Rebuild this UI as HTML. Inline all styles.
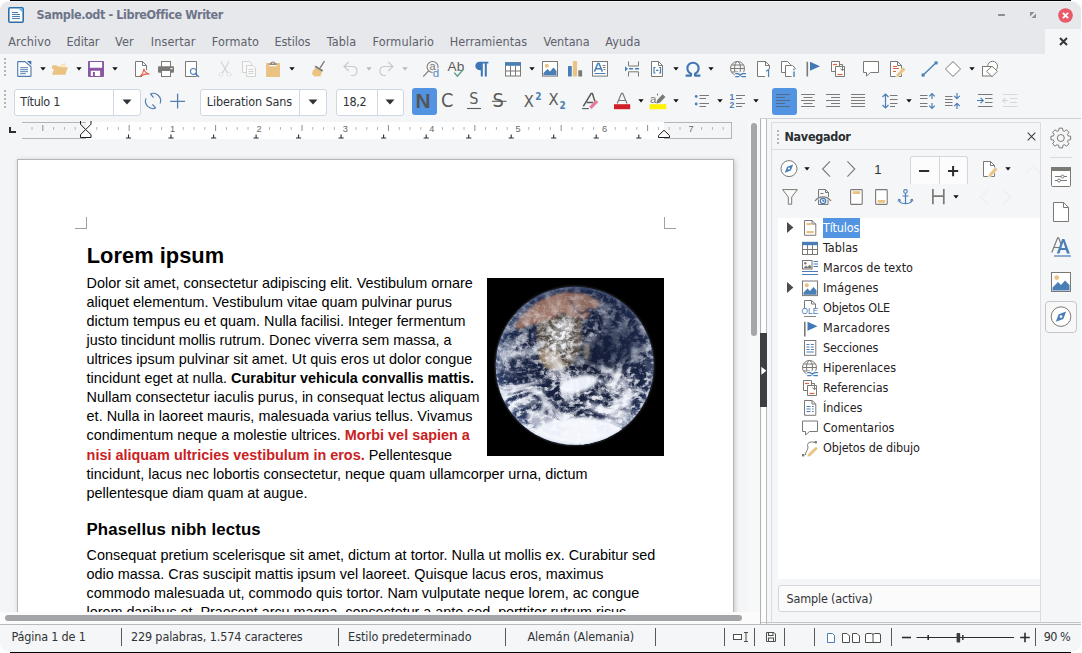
<!DOCTYPE html>
<html lang="es"><head><meta charset="utf-8"><title>Sample.odt - LibreOffice Writer</title>
<style>
html,body{margin:0;padding:0}
body{width:1082px;height:653px;position:relative;overflow:hidden;background:#fff;font-family:"DejaVu Sans Condensed","DejaVu Sans","Liberation Sans",sans-serif}
.u{position:absolute;white-space:pre;line-height:20px;font-family:"DejaVu Sans Condensed","DejaVu Sans","Liberation Sans",sans-serif}
.d{position:absolute;white-space:pre;line-height:20px;font-family:"Liberation Sans",sans-serif}
.a{position:absolute}
svg{position:absolute;overflow:visible}
.cb{background:#fff;border:1px solid #cfd6e6;border-radius:3px;box-sizing:border-box}
.cbd{width:1px;height:25px;background:#cfd6e6}
</style></head><body>
<div class="a" style="left:10px;top:0;width:1061px;height:653px;background:#000"></div>
<div class="a" id="win" style="left:0;top:1px;width:1081px;height:651px;background:#f5f6f7;border-radius:9px"></div>
<div class="a" id="titlebar" style="left:0;top:1px;width:1081px;height:53px;background:#e7e8eb;border-radius:9px 9px 0 0;box-shadow:inset 0 1px 0 #f3f4f6"></div>
<div class="a" style="left:1045px;top:29px;width:36px;height:25px;background:#f5f6f7"></div>

<!-- document area -->
<div class="a" id="docarea" style="left:0;top:0;width:748px;height:611.5px;overflow:hidden">
  <div class="a" style="left:0;top:119px;width:748px;height:493px;background:#f4f5f6"></div>
  <!-- ruler -->
  <div class="a" style="left:22px;top:122px;width:64px;height:15px;border-top:1px solid #b4b5b8;border-bottom:1px solid #b4b5b8"></div>
  <div class="a" style="left:86px;top:122px;width:578px;height:17px;background:#fff"></div>
  <div class="a" style="left:664px;top:122px;width:67px;height:15px;border:1px solid #b4b5b8;border-left:none"></div>
  <svg style="left:0;top:0" width="748" height="142" viewBox="0 0 748 142"><path d="M32.0 127V130" stroke="#b3b4b6" stroke-width="1"/><path d="M42.8 125V131" stroke="#8d8e90" stroke-width="1"/><path d="M53.6 127V130" stroke="#b3b4b6" stroke-width="1"/><path d="M64.4 127V130" stroke="#b3b4b6" stroke-width="1"/><path d="M75.2 127V130" stroke="#b3b4b6" stroke-width="1"/><path d="M96.8 127V130" stroke="#b3b4b6" stroke-width="1"/><path d="M107.6 127V130" stroke="#b3b4b6" stroke-width="1"/><path d="M118.4 127V130" stroke="#b3b4b6" stroke-width="1"/><path d="M129.2 125V131" stroke="#8d8e90" stroke-width="1"/><path d="M140.0 127V130" stroke="#b3b4b6" stroke-width="1"/><path d="M150.8 127V130" stroke="#b3b4b6" stroke-width="1"/><path d="M161.6 127V130" stroke="#b3b4b6" stroke-width="1"/><text x="170.0" y="132" font-size="9.2" font-family="Liberation Sans,sans-serif" fill="#66686b">1</text><path d="M183.2 127V130" stroke="#b3b4b6" stroke-width="1"/><path d="M194.0 127V130" stroke="#b3b4b6" stroke-width="1"/><path d="M204.8 127V130" stroke="#b3b4b6" stroke-width="1"/><path d="M215.6 125V131" stroke="#8d8e90" stroke-width="1"/><path d="M226.4 127V130" stroke="#b3b4b6" stroke-width="1"/><path d="M237.2 127V130" stroke="#b3b4b6" stroke-width="1"/><path d="M248.0 127V130" stroke="#b3b4b6" stroke-width="1"/><text x="256.4" y="132" font-size="9.2" font-family="Liberation Sans,sans-serif" fill="#66686b">2</text><path d="M269.6 127V130" stroke="#b3b4b6" stroke-width="1"/><path d="M280.4 127V130" stroke="#b3b4b6" stroke-width="1"/><path d="M291.2 127V130" stroke="#b3b4b6" stroke-width="1"/><path d="M302.0 125V131" stroke="#8d8e90" stroke-width="1"/><path d="M312.8 127V130" stroke="#b3b4b6" stroke-width="1"/><path d="M323.6 127V130" stroke="#b3b4b6" stroke-width="1"/><path d="M334.4 127V130" stroke="#b3b4b6" stroke-width="1"/><text x="342.8" y="132" font-size="9.2" font-family="Liberation Sans,sans-serif" fill="#66686b">3</text><path d="M356.0 127V130" stroke="#b3b4b6" stroke-width="1"/><path d="M366.8 127V130" stroke="#b3b4b6" stroke-width="1"/><path d="M377.6 127V130" stroke="#b3b4b6" stroke-width="1"/><path d="M388.4 125V131" stroke="#8d8e90" stroke-width="1"/><path d="M399.2 127V130" stroke="#b3b4b6" stroke-width="1"/><path d="M410.0 127V130" stroke="#b3b4b6" stroke-width="1"/><path d="M420.8 127V130" stroke="#b3b4b6" stroke-width="1"/><text x="429.2" y="132" font-size="9.2" font-family="Liberation Sans,sans-serif" fill="#66686b">4</text><path d="M442.4 127V130" stroke="#b3b4b6" stroke-width="1"/><path d="M453.2 127V130" stroke="#b3b4b6" stroke-width="1"/><path d="M464.0 127V130" stroke="#b3b4b6" stroke-width="1"/><path d="M474.8 125V131" stroke="#8d8e90" stroke-width="1"/><path d="M485.6 127V130" stroke="#b3b4b6" stroke-width="1"/><path d="M496.4 127V130" stroke="#b3b4b6" stroke-width="1"/><path d="M507.2 127V130" stroke="#b3b4b6" stroke-width="1"/><text x="515.6" y="132" font-size="9.2" font-family="Liberation Sans,sans-serif" fill="#66686b">5</text><path d="M528.8 127V130" stroke="#b3b4b6" stroke-width="1"/><path d="M539.6 127V130" stroke="#b3b4b6" stroke-width="1"/><path d="M550.4 127V130" stroke="#b3b4b6" stroke-width="1"/><path d="M561.2 125V131" stroke="#8d8e90" stroke-width="1"/><path d="M572.0 127V130" stroke="#b3b4b6" stroke-width="1"/><path d="M582.8 127V130" stroke="#b3b4b6" stroke-width="1"/><path d="M593.6 127V130" stroke="#b3b4b6" stroke-width="1"/><text x="602.0" y="132" font-size="9.2" font-family="Liberation Sans,sans-serif" fill="#66686b">6</text><path d="M615.2 127V130" stroke="#b3b4b6" stroke-width="1"/><path d="M626.0 127V130" stroke="#b3b4b6" stroke-width="1"/><path d="M636.8 127V130" stroke="#b3b4b6" stroke-width="1"/><path d="M647.6 125V131" stroke="#8d8e90" stroke-width="1"/><path d="M658.4 127V130" stroke="#b3b4b6" stroke-width="1"/><path d="M669.2 127V130" stroke="#b3b4b6" stroke-width="1"/><path d="M680.0 127V130" stroke="#b3b4b6" stroke-width="1"/><text x="688.4" y="132" font-size="9.2" font-family="Liberation Sans,sans-serif" fill="#66686b">7</text><path d="M701.6 127V130" stroke="#b3b4b6" stroke-width="1"/><path d="M712.4 127V130" stroke="#b3b4b6" stroke-width="1"/><path d="M723.2 127V130" stroke="#b3b4b6" stroke-width="1"/><path d="M128.5 134.6V138M125.9 138H131.1" stroke="#2d2d2d" stroke-width="1.1"/><path d="M171.0 134.6V138M168.4 138H173.6" stroke="#2d2d2d" stroke-width="1.1"/><path d="M213.6 134.6V138M211.0 138H216.2" stroke="#2d2d2d" stroke-width="1.1"/><path d="M256.1 134.6V138M253.5 138H258.7" stroke="#2d2d2d" stroke-width="1.1"/><path d="M298.6 134.6V138M296.0 138H301.2" stroke="#2d2d2d" stroke-width="1.1"/><path d="M341.1 134.6V138M338.5 138H343.7" stroke="#2d2d2d" stroke-width="1.1"/><path d="M383.6 134.6V138M381.0 138H386.2" stroke="#2d2d2d" stroke-width="1.1"/><path d="M426.2 134.6V138M423.6 138H428.8" stroke="#2d2d2d" stroke-width="1.1"/><path d="M468.7 134.6V138M466.1 138H471.3" stroke="#2d2d2d" stroke-width="1.1"/><path d="M511.2 134.6V138M508.6 138H513.8" stroke="#2d2d2d" stroke-width="1.1"/><path d="M553.7 134.6V138M551.1 138H556.3" stroke="#2d2d2d" stroke-width="1.1"/><path d="M596.2 134.6V138M593.6 138H598.8" stroke="#2d2d2d" stroke-width="1.1"/><path d="M638.8 134.6V138M636.2 138H641.4" stroke="#2d2d2d" stroke-width="1.1"/><path d="M80.5 121V124.2L85.7 129.6L91 124.2V121" stroke="#1c1c1c" fill="none" stroke-width="1"/><path d="M85.7 129.6L80.5 134.6V137.5H91V134.6z" stroke="#1c1c1c" fill="#fff" stroke-width="1"/><path d="M664 130.2L658.5 135.6V137.5H669.5V135.6z" stroke="#1c1c1c" fill="#fff" stroke-width="1"/><path d="M10 127V132H16" stroke="#2d2d2d" stroke-width="2" fill="none"/></svg>
  <!-- page -->
  <div class="a" id="page" style="left:17px;top:159px;width:717px;height:470px;background:#fff;border:1px solid #b4b5b8;box-sizing:border-box;box-shadow:1px 1px 5px rgba(0,0,0,.2)"></div>
  <!-- margin marks -->
  <div class="a" style="left:75px;top:217px;width:11px;height:11px;border-right:1px solid #a0a0a0;border-bottom:1px solid #a0a0a0"></div>
  <div class="a" style="left:664px;top:217px;width:11px;height:11px;border-left:1px solid #a0a0a0;border-bottom:1px solid #a0a0a0"></div>
  <svg style="left:487px;top:278px" width="177" height="177.6" viewBox="0 0 177 177.6">
<defs>
<radialGradient id="eo" cx="52%" cy="46%" r="54%"><stop offset="0" stop-color="#131a31"/><stop offset=".7" stop-color="#1a2545"/><stop offset=".9" stop-color="#34466f"/><stop offset="1" stop-color="#8b9cc6"/></radialGradient>
<linearGradient id="ecm" x1="0" y1="0" x2="0" y2="1"><stop offset="0" stop-color="#fff" stop-opacity=".12"/><stop offset=".3" stop-color="#fff" stop-opacity=".5"/><stop offset=".6" stop-color="#fff" stop-opacity=".9"/><stop offset="1" stop-color="#fff" stop-opacity="1"/></linearGradient>
<clipPath id="ec"><circle cx="87.7" cy="87.7" r="79"/></clipPath>
<filter id="eb1" x="-20%" y="-20%" width="140%" height="140%"><feGaussianBlur stdDeviation="1"/></filter>
<filter id="eb2" x="-30%" y="-30%" width="160%" height="160%"><feGaussianBlur stdDeviation="1.8"/></filter>
<filter id="eb4" x="-40%" y="-40%" width="180%" height="180%"><feGaussianBlur stdDeviation="7"/></filter>
<mask id="em"><rect width="177" height="177" fill="url(#ecm)"/>
 <g filter="url(#eb4)" fill="#000"><ellipse cx="134" cy="68" rx="24" ry="22" opacity=".7"/><ellipse cx="34" cy="98" rx="17" ry="10" opacity=".55"/><ellipse cx="106" cy="78" rx="15" ry="15" opacity=".8"/><ellipse cx="70" cy="128" rx="24" ry="5" opacity=".45"/></g></mask>
<filter id="ecl" x="0" y="0" width="100%" height="100%">
 <feTurbulence type="fractalNoise" baseFrequency=".018 .022" numOctaves="2" seed="7" result="w"/>
 <feTurbulence type="fractalNoise" baseFrequency=".05 .075" numOctaves="5" seed="11" result="n"/>
 <feDisplacementMap in="n" in2="w" scale="70" xChannelSelector="R" yChannelSelector="G"/>
 <feColorMatrix type="matrix" values="0 0 0 0 .9  0 0 0 0 .92  0 0 0 0 .98  3.6 1.8 0 0 -2.5"/></filter>
<filter id="ecl2" x="0" y="0" width="100%" height="100%"><feTurbulence type="fractalNoise" baseFrequency=".17 .22" numOctaves="3" seed="4"/><feColorMatrix type="matrix" values="0 0 0 0 .94  0 0 0 0 .96  0 0 0 0 1  4.4 1.4 0 0 -2.8"/></filter>
<mask id="em3"><g filter="url(#eb4)" fill="#fff"><ellipse cx="73" cy="60" rx="15" ry="21" transform="rotate(12 73 60)"/><ellipse cx="36" cy="70" rx="14" ry="12" opacity=".5"/><ellipse cx="128" cy="112" rx="16" ry="18" opacity=".5"/></g></mask>
<filter id="ecl3" x="0" y="0" width="100%" height="100%"><feTurbulence type="fractalNoise" baseFrequency=".2 .24" numOctaves="3" seed="23"/><feColorMatrix type="matrix" values="0 0 0 0 .95  0 0 0 0 .96  0 0 0 0 1  5 2 0 0 -3.25"/></filter>
</defs>
<rect width="177" height="178" fill="#000"/>
<g clip-path="url(#ec)">
<rect width="177" height="177" fill="url(#eo)"/>
<!-- land -->
<g filter="url(#eb1)">
<path d="M50 46L60 40L76 36L90 38L96 44L94 52L96 62L93 74L86 86L76 92L64 90L54 78L50 62z" fill="#4f4640"/>
<path d="M27 50L33 40L42 31L54 22L68 16.5L79 14L86 15.5L89 22L92 30L95 36L89 40L82 37L74 35L66 40L56 44L44 47L34 51z" fill="#916b5e"/>
<path d="M36 44L48 32L62 24L76 20L84 22L86 30L78 32L68 35L58 40L46 45z" fill="#9c7668"/>
<path d="M84 14.5L97 15.5L108 20.5L114 26.5L108 31L101 30L97 34L104 34L100 40L94 42L90 33L87 23z" fill="#8d6c61"/>
<path d="M81 19.5L85 25L90 33L95 35.5L103 32" stroke="#1c2746" stroke-width="1.6" fill="none"/>
<path d="M50 73L60 71L70 75L78 88L70 92L60 91L53 83z" fill="#93806a"/>
<path d="M96.5 67L101.5 66L102.5 74L100 82L97 79z" fill="#6f675e"/>
</g>
<!-- broad cloud masses -->
<g filter="url(#eb2)" fill="#e9edf6">
<ellipse cx="92" cy="155" rx="44" ry="16" fill="#f3f5fb"/>
<ellipse cx="60" cy="146" rx="22" ry="9" opacity=".7" transform="rotate(24 60 146)"/>
<ellipse cx="126" cy="144" rx="20" ry="8" opacity=".6" transform="rotate(-28 126 144)"/>
<ellipse cx="92" cy="106" rx="19" ry="8" transform="rotate(-14 92 106)"/>
<ellipse cx="74" cy="58" rx="10" ry="16" opacity=".3" transform="rotate(16 74 58)"/>
<path d="M26 114C32 106 52 108 57 122C60 134 50 140 43 134" stroke="#e9edf6" stroke-width="5" fill="none" opacity=".85"/>
<path d="M36 121C41 117 49 120 50 126" stroke="#e9edf6" stroke-width="3" fill="none" opacity=".7"/>
<path d="M114 90C132 96 146 112 141 132" stroke="#e9edf6" stroke-width="5" fill="none" opacity=".7"/>
<path d="M104 98C120 104 130 116 128 130" stroke="#e9edf6" stroke-width="3" fill="none" opacity=".55"/>
<ellipse cx="137" cy="122" rx="12" ry="6" opacity=".7" transform="rotate(-42 137 122)"/>
<ellipse cx="34" cy="75" rx="15" ry="4" opacity=".55" transform="rotate(-15 34 75)"/>
<ellipse cx="112" cy="131" rx="17" ry="4.5" opacity=".6" transform="rotate(20 112 131)"/>
<ellipse cx="148" cy="76" rx="4" ry="9" opacity=".45" transform="rotate(-12 148 76)"/>
</g>
<!-- noise clouds -->
<g mask="url(#em)"><rect width="177" height="177" filter="url(#ecl)"/></g>
<g mask="url(#em)" opacity=".85"><rect width="177" height="177" filter="url(#ecl2)"/></g>
<g mask="url(#em3)"><rect width="177" height="177" filter="url(#ecl3)"/></g>
</g>
<circle cx="87.7" cy="87.7" r="78.7" fill="none" stroke="#b4c2e4" stroke-opacity=".55" stroke-width="1.1" filter="url(#eb1)"/>
</svg>

  <span class="d" style="left:86.75px;top:246.13px;font-size:21.84px;font-weight:700;color:#000;letter-spacing:0.026px;">Lorem ipsum</span>
<span class="d" style="left:86.60px;top:273.41px;font-size:14.4px;font-weight:400;color:#000;letter-spacing:0.011px;">Dolor sit amet, consectetur adipiscing elit. Vestibulum ornare</span>
<span class="d" style="left:86.60px;top:292.41px;font-size:14.4px;font-weight:400;color:#000;letter-spacing:0.013px;">aliquet elementum. Vestibulum vitae quam pulvinar purus</span>
<span class="d" style="left:86.60px;top:311.41px;font-size:14.4px;font-weight:400;color:#000;letter-spacing:-0.006px;">dictum tempus eu et quam. Nulla facilisi. Integer fermentum</span>
<span class="d" style="left:86.60px;top:330.41px;font-size:14.4px;font-weight:400;color:#000;letter-spacing:0.005px;">justo tincidunt mollis rutrum. Donec viverra sem massa, a</span>
<span class="d" style="left:86.60px;top:349.41px;font-size:14.4px;font-weight:400;color:#000;letter-spacing:0.016px;">ultrices ipsum pulvinar sit amet. Ut quis eros ut dolor congue</span>
<span class="d" style="left:86.60px;top:368.41px;font-size:14.4px;font-weight:400;color:#000;letter-spacing:0.019px;">tincidunt eget at nulla. <b>Curabitur vehicula convallis mattis.</b></span>
<span class="d" style="left:86.60px;top:387.41px;font-size:14.4px;font-weight:400;color:#000;letter-spacing:0.004px;">Nullam consectetur iaculis purus, in consequat lectus aliquam</span>
<span class="d" style="left:86.60px;top:406.41px;font-size:14.4px;font-weight:400;color:#000;letter-spacing:0.022px;">et. Nulla in laoreet mauris, malesuada varius tellus. Vivamus</span>
<span class="d" style="left:86.60px;top:425.41px;font-size:14.4px;font-weight:400;color:#000;letter-spacing:0.017px;">condimentum neque a molestie ultrices. <b style="color:#c9211e">Morbi vel sapien a</b></span>
<span class="d" style="left:86.60px;top:445.01px;font-size:14.4px;font-weight:400;color:#000;letter-spacing:0.014px;"><b style="color:#c9211e">nisi aliquam ultricies vestibulum in eros.</b> Pellentesque</span>
<span class="d" style="left:86.60px;top:464.21px;font-size:14.4px;font-weight:400;color:#000;letter-spacing:0.003px;">tincidunt, lacus nec lobortis consectetur, neque quam ullamcorper urna, dictum</span>
<span class="d" style="left:86.60px;top:483.21px;font-size:14.4px;font-weight:400;color:#000;letter-spacing:-0.001px;">pellentesque diam quam at augue.</span>
<span class="d" style="left:86.50px;top:520.38px;font-size:16.8px;font-weight:700;color:#000;letter-spacing:0.129px;">Phasellus nibh lectus</span>
<span class="d" style="left:86.60px;top:545.01px;font-size:14.4px;font-weight:400;color:#000;letter-spacing:0.018px;">Consequat pretium scelerisque sit amet, dictum at tortor. Nulla ut mollis ex. Curabitur sed</span>
<span class="d" style="left:86.60px;top:563.91px;font-size:14.4px;font-weight:400;color:#000;letter-spacing:0.012px;">odio massa. Cras suscipit mattis ipsum vel laoreet. Quisque lacus eros, maximus</span>
<span class="d" style="left:86.60px;top:582.81px;font-size:14.4px;font-weight:400;color:#000;letter-spacing:0.020px;">commodo malesuada ut, commodo quis tortor. Nam vulputate neque lorem, ac congue</span>
<span class="d" style="left:86.60px;top:601.71px;font-size:14.4px;font-weight:400;color:#000;letter-spacing:-0.032px;">lorem dapibus et. Praesent arcu magna, consectetur a ante sed, porttitor rutrum risus.</span>
</div>

<!-- vertical scrollbar -->
<div class="a" style="left:748px;top:119px;width:12px;height:493px;background:#f7f8f8"></div>
<div class="a" style="left:751px;top:123px;width:6px;height:213px;background:#a6a7ab;border-radius:3px"></div>
<!-- horizontal scrollbar -->
<div class="a" style="left:0;top:611.5px;width:761px;height:12.5px;background:#fbfbfc"></div>
<div class="a" style="left:5px;top:615px;width:737px;height:6px;background:#a4a5a9;border-radius:3px"></div>

<!-- sidebar -->
<div class="a" style="left:760px;top:118px;width:321px;height:1px;background:#cfd0d4"></div>
<div class="a" style="left:760px;top:119px;width:7px;height:505px;background:#fdfdfd;border-left:1px solid #b0b1b5;border-right:1px solid #b9babe;box-sizing:border-box"></div>
<div class="a" style="left:760px;top:333px;width:7px;height:74px;background:#3b3e42"></div>
<svg style="left:761px;top:366px" width="6" height="10" viewBox="0 0 6 10"><path d="M.3 .8L5.4 4.8L.3 8.8z" fill="#fff"/></svg>
<div class="a" id="deck" style="left:771px;top:122px;width:270px;height:500px;background:#f5f6f7;border-left:1px solid #dcdde0;border-top:1px solid #dcdde0;border-right:1px solid #dcdde0;box-sizing:border-box"></div>
<div class="a" style="left:772px;top:149px;width:268px;height:1px;background:#dcdde0"></div>
<!-- spin buttons -->
<div class="a" style="left:910px;top:156px;width:58px;height:28px;background:#fcfcfc;border:1px solid #d5d7dd;border-bottom:none;box-sizing:border-box;border-radius:3px 3px 0 0"></div>
<div class="a" style="left:939px;top:157px;width:1px;height:27px;background:#d5d7dd"></div>
<!-- tree -->
<div class="a" style="left:778px;top:218px;width:262px;height:361px;background:#fff"></div>
<div class="a" style="left:823px;top:218px;width:37px;height:20px;background:#5294e2"></div>
<!-- doc dropdown -->
<div class="a" style="left:778px;top:585px;width:270px;height:27px;background:#fbfbfc;border:1px solid #d5d7dd;box-sizing:border-box;border-radius:3px;clip-path:inset(0 8px 0 0)"></div>
<!-- tabbar -->
<div class="a" style="left:1050px;top:157px;width:22px;height:1px;background:#d9dadd"></div>
<div class="a" style="left:1045px;top:301px;width:32px;height:32px;border:1px solid #c4c6cb;box-sizing:border-box;border-radius:4px;background:#f8f8f9"></div>

<!-- status bar -->
<div class="a" style="left:761px;top:622px;width:320px;height:1px;background:#c4c5c9"></div>
<div class="a" style="left:0;top:624px;width:1081px;height:1px;background:#b9babe"></div>
<!--STATUSSEP-->

<!-- toolbar widgets -->
<div class="a cb" style="left:14px;top:89px;width:127px;height:27px"></div><div class="a cbd" style="left:113px;top:90px"></div>
<div class="a cb" style="left:200px;top:89px;width:127px;height:27px"></div><div class="a cbd" style="left:299px;top:90px"></div>
<div class="a cb" style="left:336px;top:89px;width:68px;height:27px"></div><div class="a cbd" style="left:377px;top:90px"></div>
<div class="a" style="left:412px;top:88px;width:25px;height:27px;background:#5294e2;border-radius:3px"></div>
<div class="a" style="left:771.5px;top:88px;width:25px;height:27px;background:#5294e2;border-radius:3px"></div>

<span class="u" style="left:36.60px;top:4.68px;font-size:12.5px;font-weight:700;color:#6d7489;letter-spacing:-0.396px;">Sample.odt - LibreOffice Writer</span>
<span class="u" style="left:8.30px;top:31.88px;font-size:12.5px;font-weight:400;color:#5c616c;letter-spacing:0.083px;">Archivo</span>
<span class="u" style="left:66.60px;top:31.88px;font-size:12.5px;font-weight:400;color:#5c616c;letter-spacing:-0.083px;">Editar</span>
<span class="u" style="left:115.10px;top:31.88px;font-size:12.5px;font-weight:400;color:#5c616c;letter-spacing:0.178px;">Ver</span>
<span class="u" style="left:150.80px;top:31.88px;font-size:12.5px;font-weight:400;color:#5c616c;letter-spacing:0.117px;">Insertar</span>
<span class="u" style="left:211.80px;top:31.88px;font-size:12.5px;font-weight:400;color:#5c616c;letter-spacing:0.095px;">Formato</span>
<span class="u" style="left:274.60px;top:31.88px;font-size:12.5px;font-weight:400;color:#5c616c;letter-spacing:-0.108px;">Estilos</span>
<span class="u" style="left:326.80px;top:31.88px;font-size:12.5px;font-weight:400;color:#5c616c;letter-spacing:0.128px;">Tabla</span>
<span class="u" style="left:372.60px;top:31.88px;font-size:12.5px;font-weight:400;color:#5c616c;letter-spacing:0.147px;">Formulario</span>
<span class="u" style="left:449.70px;top:31.88px;font-size:12.5px;font-weight:400;color:#5c616c;letter-spacing:0.067px;">Herramientas</span>
<span class="u" style="left:543.40px;top:31.88px;font-size:12.5px;font-weight:400;color:#5c616c;letter-spacing:0.015px;">Ventana</span>
<span class="u" style="left:605.20px;top:31.88px;font-size:12.5px;font-weight:400;color:#5c616c;letter-spacing:0.129px;">Ayuda</span>
<span class="u" style="left:20.20px;top:91.97px;font-size:12.5px;font-weight:400;color:#303336;letter-spacing:-0.296px;">Título 1</span>
<span class="u" style="left:206.80px;top:91.97px;font-size:12.5px;font-weight:400;color:#303336;letter-spacing:-0.120px;">Liberation Sans</span>
<span class="u" style="left:342.80px;top:91.97px;font-size:12.5px;font-weight:400;color:#303336;letter-spacing:-0.383px;">18,2</span>
<span class="u" style="left:784.50px;top:126.67px;font-size:12.5px;font-weight:700;color:#2b2e31;letter-spacing:-0.314px;">Navegador</span>
<span class="u" style="left:874.20px;top:159.50px;font-size:13px;font-weight:400;color:#303336;font-family:Liberation Sans,sans-serif;">1</span>
<span class="u" style="left:823.00px;top:217.68px;font-size:12.5px;font-weight:400;color:#ffffff;letter-spacing:-0.184px;">Títulos</span>
<span class="u" style="left:823.00px;top:237.68px;font-size:12.5px;font-weight:400;color:#1f2123;letter-spacing:0.047px;">Tablas</span>
<span class="u" style="left:823.00px;top:257.68px;font-size:12.5px;font-weight:400;color:#1f2123;letter-spacing:-0.015px;">Marcos de texto</span>
<span class="u" style="left:823.00px;top:277.68px;font-size:12.5px;font-weight:400;color:#1f2123;letter-spacing:0.020px;">Imágenes</span>
<span class="u" style="left:823.00px;top:297.68px;font-size:12.5px;font-weight:400;color:#1f2123;letter-spacing:-0.180px;">Objetos OLE</span>
<span class="u" style="left:823.00px;top:317.68px;font-size:12.5px;font-weight:400;color:#1f2123;letter-spacing:0.183px;">Marcadores</span>
<span class="u" style="left:823.00px;top:337.68px;font-size:12.5px;font-weight:400;color:#1f2123;letter-spacing:-0.116px;">Secciones</span>
<span class="u" style="left:823.00px;top:357.68px;font-size:12.5px;font-weight:400;color:#1f2123;letter-spacing:0.006px;">Hiperenlaces</span>
<span class="u" style="left:823.00px;top:377.68px;font-size:12.5px;font-weight:400;color:#1f2123;letter-spacing:-0.011px;">Referencias</span>
<span class="u" style="left:823.00px;top:397.68px;font-size:12.5px;font-weight:400;color:#1f2123;letter-spacing:-0.041px;">Índices</span>
<span class="u" style="left:823.00px;top:417.68px;font-size:12.5px;font-weight:400;color:#1f2123;letter-spacing:-0.012px;">Comentarios</span>
<span class="u" style="left:823.00px;top:437.68px;font-size:12.5px;font-weight:400;color:#1f2123;letter-spacing:-0.132px;">Objetos de dibujo</span>
<span class="u" style="left:786.60px;top:588.67px;font-size:12.5px;font-weight:400;color:#303336;letter-spacing:-0.191px;">Sample (activa)</span>
<span class="u" style="left:11.50px;top:626.97px;font-size:12.5px;font-weight:400;color:#303336;letter-spacing:-0.176px;">Página 1 de 1</span>
<span class="u" style="left:130.90px;top:626.97px;font-size:12.5px;font-weight:400;color:#303336;letter-spacing:-0.137px;">229 palabras, 1.574 caracteres</span>
<span class="u" style="left:348.10px;top:626.97px;font-size:12.5px;font-weight:400;color:#303336;letter-spacing:-0.047px;">Estilo predeterminado</span>
<span class="u" style="left:527.40px;top:626.97px;font-size:12.5px;font-weight:400;color:#303336;letter-spacing:-0.065px;">Alemán (Alemania)</span>
<span class="u" style="left:1043.70px;top:626.97px;font-size:12.5px;font-weight:400;color:#303336;letter-spacing:-0.520px;">90 %</span>
<span class="u" style="left:415.40px;top:90.56px;font-size:20.9px;font-weight:700;color:#545557;font-family:Liberation Sans,sans-serif;">N</span>
<span class="u" style="left:441.00px;top:90.98px;font-size:19.7px;font-weight:400;color:#5b5b59;">C</span>
<span class="u" style="left:469.20px;top:89.46px;font-size:16px;font-weight:400;color:#5b5b59;">S</span>
<span class="u" style="left:492.60px;top:90.98px;font-size:19.7px;font-weight:400;color:#5b5b59;">S</span>
<span class="u" style="left:523.70px;top:92.33px;font-size:16.4px;font-weight:400;color:#5b5b59;">X</span>
<span class="u" style="left:535.20px;top:86.54px;font-size:10px;font-weight:700;color:#4a7eb6;">2</span>
<span class="u" style="left:548.60px;top:89.53px;font-size:16.4px;font-weight:400;color:#5b5b59;">X</span>
<span class="u" style="left:559.40px;top:95.54px;font-size:10px;font-weight:700;color:#4a7eb6;">2</span>
<svg style="left:3.5px;top:58.2px" width="2" height="20"><rect x="0" y="0.0" width="2" height="2" fill="#b4b5b8"/><rect x="0" y="4.0" width="2" height="2" fill="#b4b5b8"/><rect x="0" y="8.0" width="2" height="2" fill="#b4b5b8"/><rect x="0" y="12.0" width="2" height="2" fill="#b4b5b8"/><rect x="0" y="16.0" width="2" height="2" fill="#b4b5b8"/></svg>
<svg style="left:3.5px;top:90.2px" width="2" height="20"><rect x="0" y="0.0" width="2" height="2" fill="#b4b5b8"/><rect x="0" y="4.0" width="2" height="2" fill="#b4b5b8"/><rect x="0" y="8.0" width="2" height="2" fill="#b4b5b8"/><rect x="0" y="12.0" width="2" height="2" fill="#b4b5b8"/><rect x="0" y="16.0" width="2" height="2" fill="#b4b5b8"/></svg>
<svg style="left:16px;top:61px" width="16" height="16" viewBox="0 0 16 16" fill="none" ><path d="M2.4 .6H9L15 5.8V14.7Q15 15.4 14.3 15.4H2.4Q1.7 15.4 1.7 14.7V1.3Q1.7 .6 2.4 .6z" fill="#fff" stroke="#4f7db2" stroke-width="1.15" stroke-linejoin="round"/><path d="M11 0H15.3V4.1z" fill="#3f6ea8"/><path d="M4.2 6.7H12M4.2 8.7H12M4.2 10.7H12M4.2 12.7H9.8" stroke="#4f7db2" stroke-width="1"/></svg>
<svg style="left:39.7px;top:67px" width="6" height="4" viewBox="0 0 6 4"><path d="M0.3 0.3h5.4L3 3.4z" fill="#111"/></svg>
<svg style="left:52px;top:61px" width="16" height="16" viewBox="0 0 16 16" fill="none" ><path d="M0 13.7V5Q0 4.2 .8 4.2H4.4L5.8 5.6H9V8H0z" fill="#e9c486"/><path d="M8.6 6.6V3.6L12.8 2.1Q13.8 1.9 13.8 2.9V6.6z" fill="#f8e9c2"/><path d="M0 13.7L2.7 6.3H15.9L13.3 13.7z" fill="#eac282"/></svg>
<svg style="left:75.5px;top:67px" width="6" height="4" viewBox="0 0 6 4"><path d="M0.3 0.3h5.4L3 3.4z" fill="#111"/></svg>
<svg style="left:88px;top:61px" width="16" height="16" viewBox="0 0 16 16" fill="none" ><rect x="0" y="0" width="16" height="16" rx="1" fill="#8b57a5"/><rect x="1.9" y=".9" width="12.2" height="5.9" rx=".4" fill="#fff"/><rect x="2.8" y="9.75" width="9.3" height="5.35" rx=".3" fill="#fff"/><rect x="4.9" y="11" width="2" height="4.1" fill="#8b57a5"/></svg>
<svg style="left:111.5px;top:67px" width="6" height="4" viewBox="0 0 6 4"><path d="M0.3 0.3h5.4L3 3.4z" fill="#111"/></svg>
<svg style="left:134px;top:61px" width="16" height="16" viewBox="0 0 16 16" fill="none" ><path d="M1.5 0.5H8.5L12.5 4.5V15.5H1.5z" fill="#fff" stroke="#7b7976"/><path d="M8.5 0.5V4.5H12.5" stroke="#7b7976"/><rect x="8" y="9" width="6" height="7.5" fill="#f5f6f7"/><path d="M10 8c-.3 2.4-1.4 4.8-3.6 7.2M10 8c.4 2.4 2 4.2 5 4.8M6.4 15.2c2.4-1.6 5.4-2.4 8.6-2.4" stroke="#e4604a" stroke-width="1.15" stroke-linecap="round"/></svg>
<svg style="left:158px;top:61px" width="16" height="16" viewBox="0 0 16 16" fill="none" ><rect x="3.5" y=".5" width="9" height="6" fill="#fff" stroke="#7b7976"/><rect x="0" y="5.2" width="16" height="6.6" rx="1" fill="#7b7976"/><rect x="3.5" y="9.5" width="9" height="6" fill="#fff" stroke="#7b7976"/><rect x="12.5" y="7" width="2" height="1.2" fill="#fff"/></svg>
<svg style="left:185px;top:61px" width="16" height="16" viewBox="0 0 16 16" fill="none" ><path d="M.5 .5H11.5V15.5H.5z" fill="#fff" stroke="#7b7976"/><circle cx="8.4" cy="10.5" r="3" fill="#fff" stroke="#4a7eb6" stroke-width="1.1"/><path d="M10.6 12.8L14 16" stroke="#4a7eb6" stroke-width="1.25"/></svg>
<svg style="left:217px;top:61px" width="16" height="16" viewBox="0 0 16 16" fill="none" ><path d="M4 .5L10.5 12M12 .5L5.5 12" stroke="#d3d3d2" stroke-width="1.2"/><circle cx="3.8" cy="13.3" r="2" stroke="#d3d3d2" stroke-dasharray="1.2 1"/><circle cx="12.2" cy="13.3" r="2" stroke="#d3d3d2" stroke-dasharray="1.2 1"/></svg>
<svg style="left:242px;top:61px" width="16" height="16" viewBox="0 0 16 16" fill="none" ><path d="M.5 .5H7.5L9.5 2.5V11.5H.5z" fill="#fafafa" stroke="#d3d3d2"/><path d="M4.5 4.5H11L13.5 7V15.5H4.5z" fill="#fafafa" stroke="#d3d3d2"/><path d="M6.5 8.5h5M6.5 10.5h5M6.5 12.5h5" stroke="#d3d3d2"/></svg>
<svg style="left:266px;top:61px" width="16" height="16" viewBox="0 0 16 16" fill="none" ><rect x=".1" y="2" width="13.9" height="14" rx=".7" fill="#eac282"/><rect x="3" y="3.6" width="7.8" height="1.7" fill="#f5f6f7"/><path d="M5 3C5 .3 9 .3 9 3" fill="#f5f6f7" stroke="#7b7976" stroke-width="1.1"/><path d="M3 3.2H10.8" stroke="#7b7976" stroke-width="1.2"/></svg>
<svg style="left:288.6px;top:67px" width="6" height="4" viewBox="0 0 6 4"><path d="M0.3 0.3h5.4L3 3.4z" fill="#111"/></svg>
<svg style="left:311px;top:61px" width="16" height="16" viewBox="0 0 16 16" fill="none" ><path d="M13.5 0L9 7.2" stroke="#7b7976" stroke-width="1.4"/><path d="M4.6 6.6L11 10.6L9.5 15.2L3.6 15.6L.9 13Q1.6 9.4 4.6 6.6z" fill="#eac282"/><path d="M4.2 5.3L11.6 10" stroke="#7b7976" stroke-width="1.8"/></svg>
<svg style="left:343px;top:61px" width="16" height="16" viewBox="0 0 16 16" fill="none" ><path d="M5.8 1L1 5.5L5.8 10" stroke="#c9c9c8" stroke-width="1.2"/><path d="M1.2 5.5H9.5C15.5 5.5 15.5 14.5 9.5 14.5H8" stroke="#c9c9c8" stroke-width="1.2"/></svg>
<svg style="left:365.6px;top:67.3px" width="6" height="4" viewBox="0 0 6 4"><path d="M0.3 0.3h5.4L3 3.4z" fill="#b9b9b9"/></svg>
<svg style="left:378px;top:61px" width="16" height="16" viewBox="0 0 16 16" fill="none" ><g transform="translate(16,0) scale(-1,1)"><path d="M5.8 1L1 5.5L5.8 10" stroke="#c9c9c8" stroke-width="1.2"/><path d="M1.2 5.5H9.5C15.5 5.5 15.5 14.5 9.5 14.5H8" stroke="#c9c9c8" stroke-width="1.2"/></g></svg>
<svg style="left:401.8px;top:67.3px" width="6" height="4" viewBox="0 0 6 4"><path d="M0.3 0.3h5.4L3 3.4z" fill="#b9b9b9"/></svg>
<svg style="left:423px;top:61px" width="16" height="16" viewBox="0 0 16 16" fill="none" ><circle cx="9.6" cy="5.9" r="5.5" stroke="#7b7976" stroke-width="1.05"/><path d="M5.6 9.8L.2 15.6" stroke="#7b7976" stroke-width="1.2"/><text x="6.5" y="9.2" font-size="11" font-family="Liberation Sans,sans-serif" fill="#7b7976">a</text><text x="9.8" y="15.9" font-size="11.6" font-family="Liberation Sans,sans-serif" fill="#5b8bc0" stroke="#f5f6f7" stroke-width="1.6" paint-order="stroke">d</text></svg>
<svg style="left:448px;top:61px" width="16" height="16" viewBox="0 0 16 16" fill="none" ><text x="-.4" y="9.8" font-size="13.4" font-family="Liberation Sans,sans-serif" fill="#5c5c5a" textLength="16.6" lengthAdjust="spacingAndGlyphs">Ab</text><path d="M6.3 11.7L9.4 15.2L15.6 8" stroke="#5fa088" stroke-width="1.5"/></svg>
<svg style="left:475px;top:61px" width="16" height="16" viewBox="0 0 16 16" fill="none" ><path d="M13.4 .8H5C-1.2 .8 -1.2 9.2 5 9.2H5.8V15.6H7.8V2.6H9.8V15.6H11.8V2.6H13.4z" fill="#3f76b4"/></svg>
<svg style="left:505px;top:61px" width="16" height="16" viewBox="0 0 16 16" fill="none" ><rect x=".5" y="1.8" width="15" height="13.2" fill="#fff" stroke="#7b7976"/><rect x="0" y="1.2" width="16" height="3.6" fill="#4a7eb6"/><path d="M.5 10H15.5M5.5 4.8V15M10.5 4.8V15" stroke="#7b7976"/></svg>
<svg style="left:528.5px;top:67px" width="6" height="4" viewBox="0 0 6 4"><path d="M0.3 0.3h5.4L3 3.4z" fill="#111"/></svg>
<svg style="left:542px;top:61px" width="16" height="16" viewBox="0 0 16 16" fill="none" ><rect x=".5" y=".5" width="15" height="14.6" fill="#fff" stroke="#7b7976"/><circle cx="4.8" cy="4.8" r="2" fill="#eac282"/><path d="M1.5 14.2V12L5.5 8L8 10.5L11.5 6.5L14.5 10V14.2z" fill="#4a7eb6"/></svg>
<svg style="left:568px;top:61px" width="16" height="16" viewBox="0 0 16 16" fill="none" ><rect x="0" y="5" width="3.8" height="10.6" rx=".6" fill="#4a7eb6"/><rect x="4.9" y="0" width="4.2" height="15.6" rx=".6" fill="#eac282"/><rect x="10.3" y="9.2" width="3.8" height="6.4" rx=".6" fill="#7b7976"/></svg>
<svg style="left:592px;top:61px" width="16" height="16" viewBox="0 0 16 16" fill="none" ><rect x=".5" y=".5" width="15" height="14.6" fill="#fff" stroke="#7b7976"/><path d="M2.4 10.6L5.8 2.4H7L10.4 10.6M3.7 7.8H9.1" stroke="#4a7eb6" stroke-width="1.5"/><path d="M2.5 12.5H13.5" stroke="#4a7eb6"/><path d="M10.5 4.5H13.5M11 6.5H13.5M11.5 8.5H13.5" stroke="#7b7976"/></svg>
<svg style="left:625px;top:61px" width="16" height="16" viewBox="0 0 16 16" fill="none" ><path d="M3.5 .5V5H13.5V.5" stroke="#7b7976"/><path d="M3.5 15.5V10.8H13.5V15.5" stroke="#7b7976"/><path d="M0 5.2L3 7.8L0 10.4z" fill="#4a7eb6"/><path d="M4 7.8H8M10 7.8H14" stroke="#4a7eb6" stroke-width="1.6"/></svg>
<svg style="left:650px;top:61px" width="16" height="16" viewBox="0 0 16 16" fill="none" ><path d="M1.5 0.5H8.5L12.5 4.5V15.5H1.5z" fill="#fff" stroke="#7b7976"/><path d="M8.5 0.5V4.5H12.5" stroke="#7b7976"/><path d="M5.5 6.5H4V12H5.5M9 6.5H10.5V12H9M6 9.3H8.5" stroke="#4a7eb6" stroke-width="1.2"/></svg>
<svg style="left:672.5px;top:67px" width="6" height="4" viewBox="0 0 6 4"><path d="M0.3 0.3h5.4L3 3.4z" fill="#111"/></svg>
<svg style="left:685px;top:61px" width="16" height="16" viewBox="0 0 16 16" fill="none" ><path d="M.6 14.6H6V12.8C3.6 11.6 2.4 9.6 2.4 7.2C2.4 4 4.8 1.8 8 1.8S13.6 4 13.6 7.2C13.6 9.6 12.4 11.6 10 12.8V14.6H15.4" stroke="#3f76b4" stroke-width="2.1" stroke-linejoin="round"/></svg>
<svg style="left:708.4px;top:67px" width="6" height="4" viewBox="0 0 6 4"><path d="M0.3 0.3h5.4L3 3.4z" fill="#111"/></svg>
<svg style="left:730px;top:61px" width="16" height="16" viewBox="0 0 16 16" fill="none" ><circle cx="7.5" cy="7.5" r="7" stroke="#7b7976"/><ellipse cx="7.5" cy="7.5" rx="3" ry="7" stroke="#7b7976"/><path d="M.5 7.5H14.5M1.5 4H13.5M1.5 11H8" stroke="#7b7976"/><rect x="4.6" y="11.2" width="12" height="5.5" fill="#f5f6f7"/><path d="M5.2 12.6H8.2L12.4 15.6H16M5.2 15.6H8.2L12.4 12.6H16" stroke="#4a7eb6" stroke-width="1.4"/></svg>
<svg style="left:756px;top:61px" width="16" height="16" viewBox="0 0 16 16" fill="none" ><path d="M1.5 0.5H9.5L13.5 4.5V15.5H1.5z" fill="#fff" stroke="#7b7976"/><path d="M9.5 0.5V4.5H13.5" stroke="#7b7976"/><rect x="9" y="8" width="6" height="8" fill="#f5f6f7"/><path d="M10.2 10.2L12.6 8.6V16" stroke="#4a7eb6" stroke-width="1.15"/></svg>
<svg style="left:781px;top:61px" width="16" height="16" viewBox="0 0 16 16" fill="none" ><path d="M.5 .5H6.5L9.5 3.5V11.5H.5z" fill="#fff" stroke="#7b7976"/><path d="M4.5 4.5H11.5L14.5 7.5V15.5H4.5z" fill="#fff" stroke="#7b7976"/><rect x="10.5" y="8" width="5" height="8" fill="#f5f6f7"/><path d="M13 10.5V16" stroke="#4a7eb6" stroke-width="1.4"/><rect x="12.3" y="7.6" width="1.4" height="1.5" fill="#4a7eb6"/></svg>
<svg style="left:806px;top:61px" width="16" height="16" viewBox="0 0 16 16" fill="none" ><path d="M1.3 .8V15.5" stroke="#7b7976" stroke-width="1.6"/><path d="M4 .8L14 5.3L4 9.8z" fill="#4278b5"/></svg>
<svg style="left:831px;top:61px" width="16" height="16" viewBox="0 0 16 16" fill="none" ><path d="M.5 .5H8.5V10.5H.5z" fill="#fff" stroke="#7b7976"/><path d="M4.5 5.5H13.5V15.5H4.5z" fill="#fff" stroke="#7b7976"/><path d="M2 3.5H6" stroke="#e0633d" stroke-width="1.2"/><path d="M6.5 13.5H11.5" stroke="#e0633d" stroke-width="1.2"/><path d="M8 3.5H11.5V9M9.5 7.5L11.5 9.8L13.5 7.5" stroke="#7b7976"/></svg>
<svg style="left:863px;top:61px" width="16" height="16" viewBox="0 0 16 16" fill="none" ><path d="M.5 .5H15.5V11.5H7.5L3.5 15V11.5H.5z" fill="#fff" stroke="#7b7976" stroke-linejoin="round"/></svg>
<svg style="left:889px;top:61px" width="16" height="16" viewBox="0 0 16 16" fill="none" ><path d="M1.5 0.5H8.5L12.5 4.5V15.5H1.5z" fill="#fff" stroke="#7b7976"/><path d="M8.5 0.5V4.5H12.5" stroke="#7b7976"/><path d="M4 5.5H8M4 7.5H10M4 10.5H7" stroke="#e0633d"/><path d="M14.2 6L16.8 8.6L9.8 15.4L6.8 16.2L7.6 13.2z" fill="#eac282" stroke="#f5f6f7" stroke-width=".6"/></svg>
<svg style="left:921px;top:61px" width="16" height="16" viewBox="0 0 16 16" fill="none" ><path d="M2.2 14L15 1.8" stroke="#4a7eb6" stroke-width="1.4"/><rect x=".6" y="12.6" width="3" height="3" fill="#4a7eb6"/><rect x="13.6" y=".4" width="3" height="3" fill="#4a7eb6"/></svg>
<svg style="left:945px;top:61px" width="16" height="16" viewBox="0 0 16 16" fill="none" ><path d="M8 .6L15.6 8L8 15.4L.4 8z" fill="#fff" stroke="#7b7976"/></svg>
<svg style="left:968.5px;top:67px" width="6" height="4" viewBox="0 0 6 4"><path d="M0.3 0.3h5.4L3 3.4z" fill="#111"/></svg>
<svg style="left:982px;top:61px" width="16" height="16" viewBox="0 0 16 16" fill="none" ><circle cx="10.6" cy="5.2" r="4.9" fill="#fff" stroke="#7b7976"/><rect x=".5" y="5.5" width="9.5" height="9.5" fill="#fff" stroke="#7b7976"/><path d="M10 5.2L15.4 10.4L10 15.6L4.6 10.4z" fill="#fff" stroke="#7b7976"/></svg>
<svg style="left:122.4px;top:99px" width="10" height="6" viewBox="0 0 10 6"><path d="M0.5 0.5h9L5 5.5z" fill="#2f3235"/></svg>
<svg style="left:308px;top:99px" width="10" height="6" viewBox="0 0 10 6"><path d="M0.5 0.5h9L5 5.5z" fill="#2f3235"/></svg>
<svg style="left:385.3px;top:99px" width="10" height="6" viewBox="0 0 10 6"><path d="M0.5 0.5h9L5 5.5z" fill="#2f3235"/></svg>
<svg style="left:145px;top:93px" width="16" height="16" viewBox="0 0 16 16" fill="none" ><path d="M5.3 .9A7.5 7.5 0 0 1 15.1 10.6" stroke="#5580ae" stroke-width="1.2"/><path d="M10.8 15A7.5 7.5 0 0 1 1 5.4" stroke="#5580ae" stroke-width="1.2"/><path d="M5.6 1L8.6 4.6M10.6 15L7.4 11.4" stroke="#5580ae" stroke-width="1.2"/></svg>
<svg style="left:170px;top:93px" width="16" height="16" viewBox="0 0 16 16" fill="none" ><path d="M7.6 .8V15.6M.2 8.3H15" stroke="#5580ae" stroke-width="1.3"/></svg>
<svg style="left:467px;top:93px" width="16" height="16" viewBox="0 0 16 16" fill="none" ><path d="M0 15.5H14" stroke="#5d5d5b" stroke-width="1.1"/></svg>
<svg style="left:492px;top:93px" width="16" height="16" viewBox="0 0 16 16" fill="none" ><path d="M0 8.3H14.5" stroke="#5d5d5b" stroke-width="1.1"/></svg>
<svg style="left:583px;top:93px" width="16" height="16" viewBox="0 0 16 16" fill="none" ><path d="M.3 13.4L8.2 .4H9.4L11.9 8.6M3.8 9.4H10" stroke="#585856" stroke-width="1.5" stroke-linejoin="round"/><path d="M-1 15.6H5.8" stroke="#585856" stroke-width="1.1"/><path d="M6.2 13.8L8.6 16.1L15.3 9L12.9 6.9z" fill="#e9789a"/></svg>
<svg style="left:614px;top:93px" width="16" height="16" viewBox="0 0 16 16" fill="none" ><path d="M3.2 10.5L7.5 .3H8.7L13 10.5M4.6 7.5H11.6" stroke="#7b7976" stroke-width="1.2"/><rect x="0" y="11.2" width="16.2" height="5" fill="#cf2027"/></svg>
<svg style="left:637.5px;top:98.5px" width="6" height="4" viewBox="0 0 6 4"><path d="M0.3 0.3h5.4L3 3.4z" fill="#111"/></svg>
<svg style="left:650px;top:93px" width="16" height="16" viewBox="0 0 16 16" fill="none" ><text x="0" y="9.6" font-size="11.5" font-family="Liberation Sans,sans-serif" fill="#7b7976">a</text><path d="M7.5 .5V2.5" stroke="#7b7976"/><path d="M12.6 1.2L15.4 4L10 9.8L6.4 10.6L7.2 7z" fill="#7b7976"/><rect x="-.4" y="11.2" width="16.6" height="5" fill="#fff200"/></svg>
<svg style="left:673.4px;top:98.5px" width="6" height="4" viewBox="0 0 6 4"><path d="M0.3 0.3h5.4L3 3.4z" fill="#111"/></svg>
<svg style="left:694px;top:93px" width="16" height="16" viewBox="0 0 16 16" fill="none" ><circle cx="2.2" cy="3.4" r="1.4" fill="#4a7eb6"/><circle cx="2.2" cy="11" r="1.4" fill="#4a7eb6"/><path d="M5.5 2.5H15M5.5 5.5H12M5.5 10.5H15M5.5 13.5H12" stroke="#7b7976"/></svg>
<svg style="left:717.4px;top:98.5px" width="6" height="4" viewBox="0 0 6 4"><path d="M0.3 0.3h5.4L3 3.4z" fill="#111"/></svg>
<svg style="left:730px;top:93px" width="16" height="16" viewBox="0 0 16 16" fill="none" ><text x="-.6" y="6.6" font-size="8.6" font-weight="700" font-family="Liberation Sans,sans-serif" fill="#4a7eb6">1</text><text x="-.6" y="15.2" font-size="8.6" font-weight="700" font-family="Liberation Sans,sans-serif" fill="#4a7eb6">2</text><path d="M6 2.5H15M6 5.5H12M6 10.5H15M6 13.5H12" stroke="#7b7976"/></svg>
<svg style="left:753.4px;top:98.5px" width="6" height="4" viewBox="0 0 6 4"><path d="M0.3 0.3h5.4L3 3.4z" fill="#111"/></svg>
<svg style="left:776px;top:93px" width="16" height="16" viewBox="0 0 16 16" fill="none" ><path d="M0 1.5H14M0 4.5H9M0 7.5H14M0 10.5H9M0 13.5H14" stroke="#556a86"/></svg>
<svg style="left:801px;top:93px" width="16" height="16" viewBox="0 0 16 16" fill="none" ><path d="M0 1.5H14M2.5 4.5H11.5M0 7.5H14M2.5 10.5H11.5M0 13.5H14" stroke="#7d7b79"/></svg>
<svg style="left:826px;top:93px" width="16" height="16" viewBox="0 0 16 16" fill="none" ><path d="M0 1.5H14M5 4.5H14M0 7.5H14M5 10.5H14M0 13.5H14" stroke="#7d7b79"/></svg>
<svg style="left:851px;top:93px" width="16" height="16" viewBox="0 0 16 16" fill="none" ><path d="M0 1.5H14M0 4.5H14M0 7.5H14M0 10.5H14M0 13.5H14" stroke="#7d7b79"/></svg>
<svg style="left:882px;top:93px" width="16" height="16" viewBox="0 0 16 16" fill="none" ><path d="M3.5 1V15M.5 4L3.5 1L6.5 4M.5 12L3.5 15L6.5 12" stroke="#4a7eb6" stroke-width="1.2"/><path d="M8 2.5H15.5M8 6.5H15.5M8 10.5H15.5M8 13.5H13" stroke="#7b7976"/></svg>
<svg style="left:905.6px;top:98.5px" width="6" height="4" viewBox="0 0 6 4"><path d="M0.3 0.3h5.4L3 3.4z" fill="#111"/></svg>
<svg style="left:920px;top:93px" width="16" height="16" viewBox="0 0 16 16" fill="none" ><path d="M12 .6V6M9.2 3.4L12 .6L14.8 3.4M12 15.4V10M9.2 12.6L12 15.4L14.8 12.6" stroke="#4a7eb6" stroke-width="1.2"/><path d="M0 2.5H7.5M0 5.5H7.5M0 10.5H7.5M0 13.5H7.5" stroke="#7b7976"/></svg>
<svg style="left:945px;top:93px" width="16" height="16" viewBox="0 0 16 16" fill="none" ><path d="M12 0V5.6M9.2 2.8L12 5.6L14.8 2.8M12 16V10.4M9.2 13.2L12 10.4L14.8 13.2" stroke="#4a7eb6" stroke-width="1.2"/><path d="M0 3.5H7.5M0 6.5H7.5M0 9.5H7.5M0 12.5H7.5" stroke="#7b7976"/></svg>
<svg style="left:977px;top:93px" width="16" height="16" viewBox="0 0 16 16" fill="none" ><path d="M1 1.5H15.5M8 5.5H15.5M8 9.5H15.5M1 13.5H15.5" stroke="#7b7976"/><path d="M0 7.5H6M3.5 4.8L6.2 7.5L3.5 10.2" stroke="#4a7eb6" stroke-width="1.2"/></svg>
<svg style="left:1002px;top:93px" width="16" height="16" viewBox="0 0 16 16" fill="none" ><path d="M1 1.5H15.5M8 5.5H15.5M8 9.5H15.5M1 13.5H15.5" stroke="#d8d8d8"/><path d="M6.5 7.5H.8M3.4 4.8L.7 7.5L3.4 10.2" stroke="#d8d8d8" stroke-width="1.2"/></svg>
<svg style="left:776.5px;top:129.5px" width="2" height="16"><rect x="0" y="0.0" width="2" height="2" fill="#b4b5b8"/><rect x="0" y="4.0" width="2" height="2" fill="#b4b5b8"/><rect x="0" y="8.0" width="2" height="2" fill="#b4b5b8"/><rect x="0" y="12.0" width="2" height="2" fill="#b4b5b8"/></svg>
<svg style="left:1027px;top:132px" width="9" height="9" viewBox="0 0 9 9" fill="none" ><path d="M.7 .7L8.3 8.3M8.3 .7L.7 8.3" stroke="#3c3f42" stroke-width="1.1"/></svg>
<svg style="left:780px;top:160px" width="18" height="18" viewBox="0 0 18 18" fill="none" ><circle cx="9" cy="8.6" r="8" fill="#fff" stroke="#7b7976" stroke-width="1"/><path d="M13.2 4.3999999999999995L10.9 10.5L4.8 12.8L7.1 6.699999999999999z" fill="#4a7eb6"/><circle cx="9" cy="8.6" r="1.1" fill="#fff"/></svg>
<svg style="left:804.4px;top:167.2px" width="6" height="4" viewBox="0 0 6 4"><path d="M0.3 0.3h5.4L3 3.4z" fill="#111"/></svg>
<svg style="left:822px;top:161px" width="16" height="16" viewBox="0 0 16 16" fill="none" ><path d="M8 .4L.6 8L8 15.6" stroke="#7b7976" stroke-width="1.1"/></svg>
<svg style="left:847px;top:161px" width="16" height="16" viewBox="0 0 16 16" fill="none" ><path d="M.4 .4L7.8 8L.4 15.6" stroke="#7b7976" stroke-width="1.1"/></svg>
<svg style="left:918.8px;top:169.7px" width="11" height="2" viewBox="0 0 11 2" fill="none" ><rect width="10.2" height="2" fill="#2b2e31"/></svg>
<svg style="left:947.7px;top:165.6px" width="11" height="11" viewBox="0 0 11 11" fill="none" ><path d="M0 5.1H10.2M5.1 0V10.2" stroke="#2b2e31" stroke-width="2"/></svg>
<svg style="left:982px;top:161px" width="16" height="16" viewBox="0 0 16 16" fill="none" ><path d="M1.5 0.5H8.5L12.5 4.5V15.5H1.5z" fill="#fff" stroke="#7b7976"/><path d="M8.5 0.5V4.5H12.5" stroke="#7b7976"/><path d="M13.2 6L15.8 8.6L9.2 15.2L6 16.2L7 13z" fill="#eac282" stroke="#f5f6f7" stroke-width=".6"/></svg>
<svg style="left:1004.5px;top:167px" width="6" height="4" viewBox="0 0 6 4"><path d="M0.3 0.3h5.4L3 3.4z" fill="#111"/></svg>
<svg style="left:1026px;top:166px" width="14" height="8" viewBox="0 0 14 8" fill="none" ><path d="M0 7L7 0L14 7" stroke="#ebecee" stroke-width="1"/></svg>
<svg style="left:782px;top:189px" width="16" height="16" viewBox="0 0 16 16" fill="none" ><path d="M.6 .6H15.4L9.7 8V15.2H6.3V8z" fill="#fafafa" stroke="#7b7976" stroke-linejoin="round"/></svg>
<svg style="left:815px;top:189px" width="16" height="16" viewBox="0 0 16 16" fill="none" ><path d="M3.5 8V.5H10.5L13.5 3.5V8" stroke="#7b7976"/><path d="M10.5 .5V3.5H13.5" stroke="#7b7976"/><path d="M5.5 4.5H8.5" stroke="#7b7976"/><path d="M0 12C4 6.5 12 6.5 16 12" stroke="#7b7976" stroke-width="1.2"/><path d="M3.5 10.5V15.5H13V10.5" stroke="#7b7976"/><circle cx="8" cy="12" r="2.7" fill="#fff" stroke="#4a7eb6" stroke-width="1.2"/><path d="M8 10.5V12H9.5" stroke="#4a7eb6" stroke-width="1.3"/></svg>
<svg style="left:850px;top:189px" width="13" height="16" viewBox="0 0 13 16" fill="none" ><rect x=".6" y=".6" width="11.6" height="14.8" rx=".8" fill="#fff" stroke="#7b7976" stroke-width="1.1"/><rect x="2.6" y="2.2" width="7.6" height="2.8" fill="#eac282"/></svg>
<svg style="left:875px;top:189px" width="13" height="16" viewBox="0 0 13 16" fill="none" ><rect x=".6" y=".6" width="11.6" height="14.8" rx=".8" fill="#fff" stroke="#7b7976" stroke-width="1.1"/><rect x="2.6" y="11" width="7.6" height="2.8" fill="#eac282"/></svg>
<svg style="left:898px;top:189px" width="16" height="16" viewBox="0 0 16 16" fill="none" ><circle cx="7.5" cy="2.4" r="1.8" stroke="#4a7eb6" stroke-width="1.1"/><path d="M7.5 4.2V15M4.5 7H10.5" stroke="#4a7eb6" stroke-width="1.2"/><path d="M.8 10.5C1.5 16 13.5 16 14.2 10.5" stroke="#4a7eb6" stroke-width="1.2"/><path d="M0 12.3L.9 10L3 11.5M15 12.3L14.1 10L12 11.5" stroke="#4a7eb6"/></svg>
<svg style="left:931.8px;top:189.4px" width="13" height="16" viewBox="0 0 13 16" fill="none" ><path d="M.9 0V15.2M11.8 0V15.2M.9 7.2H11.8" stroke="#7b7976" stroke-width="1.7"/></svg>
<svg style="left:953.3px;top:195px" width="6" height="4" viewBox="0 0 6 4"><path d="M0.3 0.3h5.4L3 3.4z" fill="#111"/></svg>
<svg style="left:980px;top:189px" width="31" height="16" viewBox="0 0 31 16" fill="none" ><path d="M8 .5L.6 8L8 15.5M23 .5L30.4 8L23 15.5" stroke="#e9eaec" stroke-width="1"/></svg>
<svg style="left:787px;top:221.5px" width="7" height="11" viewBox="0 0 7 11" fill="none" ><path d="M0 0L6.4 5.5L0 11z" fill="#4b4b4b"/></svg>
<svg style="left:787px;top:281.5px" width="7" height="11" viewBox="0 0 7 11" fill="none" ><path d="M0 0L6.4 5.5L0 11z" fill="#4b4b4b"/></svg>
<svg style="left:802px;top:219px" width="16" height="18" viewBox="0 0 16 18" fill="none" ><path d="M2.5 1.5H10L13.8 5V16.3H2.5z" fill="#fff" stroke="#7b7976"/><path d="M10 1.5V5H13.8" stroke="#7b7976"/><rect x="4.5" y="4" width="5" height="2.2" fill="#eac282"/><rect x="4.5" y="12" width="7.2" height="2.2" fill="#eac282"/></svg>
<svg style="left:802px;top:239px" width="16" height="18" viewBox="0 0 16 18" fill="none" ><rect x=".5" y="3.5" width="15" height="12" fill="#fff" stroke="#7b7976"/><rect x="0" y="2.8" width="16" height="3.4" fill="#4a7eb6"/><path d="M.5 10.5H15.5M5.5 6V15.5M10.5 6V15.5" stroke="#7b7976"/></svg>
<svg style="left:802px;top:259px" width="16" height="18" viewBox="0 0 16 18" fill="none" ><rect x=".5" y="1.5" width="9.5" height="8.5" fill="#fff" stroke="#7b7976"/><circle cx="3.3" cy="4.2" r="1.2" fill="#7b7976"/><path d="M1.3 9.3L4 6.6L5.6 8L7.6 5.8L9.3 7.6V9.3z" fill="#7b7976"/><path d="M11.5 2.5H16M11.5 5H16M11.5 7.5H16M0 12.5H16M0 15.5H16" stroke="#4a7eb6" stroke-width="1.1"/></svg>
<svg style="left:802px;top:279px" width="16" height="18" viewBox="0 0 16 18" fill="none" ><g transform="translate(0,1.5)"><rect x=".5" y=".5" width="15" height="14.6" fill="#fff" stroke="#7b7976"/><circle cx="4.8" cy="4.8" r="2" fill="#eac282"/><path d="M1.5 14.2V12L5.5 8L8 10.5L11.5 6.5L14.5 10V14.2z" fill="#4a7eb6"/></g></svg>
<svg style="left:802px;top:299px" width="16" height="18" viewBox="0 0 16 18" fill="none" ><path d="M2.5 9V1.5H9.5L13.5 5V9" stroke="#7b7976"/><path d="M9.5 1.5V5H13.5" stroke="#7b7976"/><text x="-.4" y="15" font-size="8.6" font-family="Liberation Sans,sans-serif" fill="#4a7eb6" textLength="16.6" lengthAdjust="spacingAndGlyphs">OLE</text><path d="M2 17.5H14" stroke="#7b7976" stroke-width=".9"/></svg>
<svg style="left:802px;top:320px" width="16" height="18" viewBox="0 0 16 18" fill="none" ><g transform="translate(1.5,1)"><path d="M1.3 .8V15.5" stroke="#7b7976" stroke-width="1.6"/><path d="M4 .8L14 5.3L4 9.8z" fill="#4278b5"/></g></svg>
<svg style="left:802px;top:339px" width="16" height="18" viewBox="0 0 16 18" fill="none" ><rect x="2.5" y="1.5" width="11.3" height="14.8" fill="#fff" stroke="#7b7976"/><path d="M4.5 5.5H7.5M8.8 5.5H11.8M4.5 8H7.5M8.8 8H11.8M4.5 10.5H7.5M8.8 10.5H11.8M4.5 13H11.8" stroke="#4a7eb6"/></svg>
<svg style="left:802px;top:360px" width="16" height="18" viewBox="0 0 16 18" fill="none" ><circle cx="7.5" cy="7.5" r="7" stroke="#7b7976"/><ellipse cx="7.5" cy="7.5" rx="3" ry="7" stroke="#7b7976"/><path d="M.5 7.5H14.5M1.5 4H13.5M1.5 11H8" stroke="#7b7976"/><rect x="4.6" y="11.2" width="12" height="5.5" fill="#fff"/><path d="M5.2 12.6H8.2L12.4 15.6H16M5.2 15.6H8.2L12.4 12.6H16" stroke="#4a7eb6" stroke-width="1.4"/></svg>
<svg style="left:802px;top:379px" width="16" height="18" viewBox="0 0 16 18" fill="none" ><path d="M1.5 1.5H9.5V11.5H1.5z" fill="#fff" stroke="#7b7976"/><path d="M5.5 6.5H14.5V16.5H5.5z" fill="#fff" stroke="#7b7976"/><path d="M3 4.5H7" stroke="#e0633d" stroke-width="1.2"/><path d="M7.5 14.5H12.5" stroke="#e0633d" stroke-width="1.2"/><path d="M9 4.5H12.5V10M10.5 8.5L12.5 10.8L14.5 8.5" stroke="#7b7976"/></svg>
<svg style="left:802px;top:399px" width="16" height="18" viewBox="0 0 16 18" fill="none" ><path d="M2.5 1.5H10L13.8 5V16.3H2.5z" fill="#fff" stroke="#7b7976"/><path d="M10 1.5V5H13.8" stroke="#7b7976"/><path d="M4.5 7.5H8.5M4.5 10H8.5M4.5 12.5H8.5" stroke="#4a7eb6" stroke-width="1.1"/><path d="M10 7.5H11.6M10 10H11.6M10 12.5H11.6" stroke="#4a7eb6" stroke-width="1.1"/></svg>
<svg style="left:802px;top:420px" width="16" height="18" viewBox="0 0 16 18" fill="none" ><path d="M.5 1H15.5V11.5H7.5L3.5 15V11.5H.5z" fill="#fff" stroke="#7b7976" stroke-linejoin="round"/></svg>
<svg style="left:802px;top:440px" width="16" height="18" viewBox="0 0 16 18" fill="none" ><path d="M3.5 15C3.5 11 6 10.5 6 7C4 3 8.5 .8 12.5 2.5" stroke="#7b7976"/><rect x="0" y="14" width="2.4" height="2.4" fill="#7b7976"/><rect x="12.5" y="1" width="2.4" height="2.4" fill="#7b7976"/><path d="M13.8 6.8L15.8 8.8L8.2 16L5.4 16.8L6.2 14z" fill="#eac282"/></svg>
<svg style="left:1050px;top:127px" width="22" height="22" viewBox="0 0 22 22" fill="none" ><path d="M9.08 1.15L12.52 1.15L12.92 3.70L14.46 4.34L16.55 2.82L18.98 5.25L17.46 7.34L18.10 8.88L20.65 9.28L20.65 12.72L18.10 13.12L17.46 14.66L18.98 16.75L16.55 19.18L14.46 17.66L12.92 18.30L12.52 20.85L9.08 20.85L8.68 18.30L7.14 17.66L5.05 19.18L2.62 16.75L4.14 14.66L3.50 13.12L0.95 12.72L0.95 9.28L3.50 8.88L4.14 7.34L2.62 5.25L5.05 2.82L7.14 4.34L8.68 3.70z" stroke="#7b7976" stroke-linejoin="round" fill="none"/><circle cx="10.8" cy="11" r="3.5" stroke="#7b7976"/></svg>
<svg style="left:1051px;top:167px" width="20" height="20" viewBox="0 0 20 20" fill="none" ><rect x=".5" y=".5" width="19" height="19" rx="1" fill="#fff" stroke="#7b7976"/><rect x="0" y="0" width="20" height="4" fill="#7b7976"/><path d="M4 9.5H16M4 13.5H16" stroke="#7b7976"/><circle cx="11.5" cy="9.5" r="1.5" fill="#fff" stroke="#7b7976"/><circle cx="8" cy="13.5" r="1.5" fill="#fff" stroke="#7b7976"/></svg>
<svg style="left:1051px;top:202px" width="20" height="20" viewBox="0 0 20 20" fill="none" ><path d="M2.5 .5H12.5L17.5 5.5V19.5H2.5z" fill="#fff" stroke="#7b7976"/><path d="M12.5 .5V5.5H17.5" stroke="#7b7976"/></svg>
<svg style="left:1051px;top:237px" width="20" height="20" viewBox="0 0 20 20" fill="none" ><path d="M.8 15.5L6.6 .8H7.6L11 9.5" stroke="#7b7976" stroke-width="1.2"/><path d="M3 10.5H9" stroke="#7b7976" stroke-width="1.1"/><path d="M5.8 16.5L11.2 2H13.4L18.8 16.5H16L14.8 13H9.6L8.4 16.5z" fill="#4a7eb6"/><path d="M10.3 11H14.2L12.3 5z" fill="#f5f6f7"/><path d="M3 19H20" stroke="#4a7eb6" stroke-width="1.2"/></svg>
<svg style="left:1051px;top:272px" width="20" height="20" viewBox="0 0 20 20" fill="none" ><rect x=".5" y=".5" width="19" height="19" fill="#fff" stroke="#7b7976"/><circle cx="5.8" cy="5.6" r="2.4" fill="#eac282"/><path d="M1.5 18.5V15.5L7 10L10 13L14 8.5L18.5 13V18.5z" fill="#4a7eb6"/></svg>
<svg style="left:1050px;top:306px" width="22" height="22" viewBox="0 0 22 22" fill="none" ><circle cx="11" cy="10.6" r="9.8" fill="#fff" stroke="#7b7976" stroke-width="1"/><path d="M16.145 5.454999999999999L13.3275 12.9275L5.8549999999999995 15.745000000000001L8.6725 8.272499999999999z" fill="#4a7eb6"/><circle cx="11" cy="10.6" r="1.3475000000000001" fill="#fff"/></svg>
<div class="a" style="left:120.5px;top:628px;width:1px;height:18px;background:#55585c"></div>
<div class="a" style="left:338.0px;top:628px;width:1px;height:18px;background:#55585c"></div>
<div class="a" style="left:505.2px;top:628px;width:1px;height:18px;background:#55585c"></div>
<div class="a" style="left:655.0px;top:628px;width:1px;height:18px;background:#55585c"></div>
<div class="a" style="left:724.0px;top:628px;width:1px;height:18px;background:#55585c"></div>
<div class="a" style="left:754.2px;top:628px;width:1px;height:18px;background:#55585c"></div>
<div class="a" style="left:783.8px;top:628px;width:1px;height:18px;background:#55585c"></div>
<div class="a" style="left:813.9px;top:628px;width:1px;height:18px;background:#55585c"></div>
<div class="a" style="left:891.1px;top:628px;width:1px;height:18px;background:#55585c"></div>
<div class="a" style="left:1035.0px;top:628px;width:1px;height:18px;background:#55585c"></div>
<svg style="left:733px;top:632px" width="16" height="10" viewBox="0 0 16 10" fill="none" ><rect x=".5" y="2.5" width="8" height="5" stroke="#4e4e4c" fill="#fff"/><path d="M11 .5H15M11 9.5H15M13 .5V9.5" stroke="#4e4e4c"/></svg>
<svg style="left:766px;top:632px" width="10" height="10" viewBox="0 0 10 10" fill="none" ><path d="M.5 .5H8L9.5 2V9.5H.5z" stroke="#4e4e4c"/><rect x="2.5" y=".5" width="4.5" height="3" stroke="#4e4e4c"/><rect x="2.5" y="6" width="5" height="3.5" stroke="#4e4e4c"/></svg>
<svg style="left:826.5px;top:632.5px" width="8" height="10" viewBox="0 0 8 10" fill="none" ><path d="M.5 .5H5.5L7.5 2.5V9.5H.5z" fill="#fff" stroke="#4a7eb6"/></svg>
<svg style="left:841.5px;top:632.5px" width="18" height="10" viewBox="0 0 18 10" fill="none" ><path d="M.5 .5H5L7.5 3V9.5H.5z" fill="#fff" stroke="#4e4e4c"/><path d="M10.5 .5H15L17.5 3V9.5H10.5z" fill="#fff" stroke="#4e4e4c"/></svg>
<svg style="left:865px;top:632.5px" width="16" height="10" viewBox="0 0 16 10" fill="none" ><path d="M.5 2Q.5 .5 2 .5H6.5Q8 .5 8 2V9.5H.5zM8 2Q8 .5 9.5 .5H14Q15.5 .5 15.5 2V9.5H8" fill="#fff" stroke="#4e4e4c"/></svg>
<svg style="left:901.5px;top:631px" width="130" height="13" viewBox="0 0 130 13" fill="none" ><path d="M0 6.5H9" stroke="#2b2e31" stroke-width="1.6"/><path d="M14.5 6.5H112" stroke="#2b2e31" stroke-width="1.2"/><path d="M26.2 4V9" stroke="#2b2e31" stroke-width="1.6"/><rect x="54.6" y="2" width="3.6" height="9.6" rx=".8" fill="#3a3d40"/><rect x="60" y="4" width="1.6" height="5" fill="#3a3d40"/><path d="M118.2 6.5H127.8M123 1.7V11.3" stroke="#2b2e31" stroke-width="1.6"/></svg>
<svg style="left:997.5px;top:14px" width="7" height="2" viewBox="0 0 7 2" fill="none" ><rect width="7" height="2" rx=".5" fill="#8b8e94"/></svg>
<svg style="left:1030px;top:12px" width="6" height="6" viewBox="0 0 6 6" fill="none" ><path d="M0 0H4.5L0 4.5zM6 6H1.5L6 1.5z" fill="#8b8e94"/></svg>
<svg style="left:1057.5px;top:7.5px" width="15" height="15" viewBox="0 0 15 15" fill="none" ><circle cx="7.5" cy="7.5" r="7.3" fill="#e8596a"/><path d="M4.9 4.9L10.1 10.1M10.1 4.9L4.9 10.1" stroke="#fff" stroke-width="1.9"/></svg>
<svg style="left:1059px;top:37px" width="9" height="9" viewBox="0 0 9 9" fill="none" ><path d="M1 1L8 8M8 1L1 8" stroke="#34373b" stroke-width="2"/></svg>
<svg style="left:8px;top:7px" width="16" height="16" viewBox="0 0 16 16" fill="none" ><rect x=".8" y=".8" width="14.4" height="14.4" rx="1.2" fill="#fff" stroke="#2f6ea8" stroke-width="1.6"/><path d="M10.6 1.6H14.4V5.4z" fill="#63b5ec"/><path d="M4 5.5H10M4 7.5H12M4 9.5H12M4 11.5H12" stroke="#3a76ad" stroke-width=".9"/></svg>
</body></html>
